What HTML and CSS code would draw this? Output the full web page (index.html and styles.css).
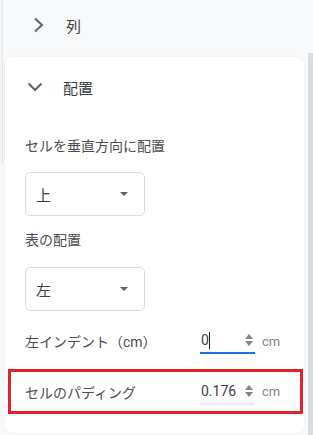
FILE: index.html
```html
<!DOCTYPE html>
<html lang="ja">
<head>
  <meta charset="UTF-8" />
  <title>表のプロパティ</title>
  <link rel="stylesheet" href="styles.css">
</head>
<body>
  <div class="page">
    <div class="rail"></div>

    <div class="main">
      <div class="section-head">
        <svg class="chevron-right" width="12" height="16" viewBox="0 0 12 16">
          <polyline points="2,1.5 9,8 2,14.5" />
        </svg>
        <span class="section-title">列</span>
      </div>

      <div class="card">
        <div class="card-head">
          <svg class="chevron-down" width="16" height="10" viewBox="0 0 16 10">
            <polyline points="1.5,1.5 8,8 14.5,1.5" />
          </svg>
          <span class="section-title">配置</span>
        </div>

        <div class="label first">セルを垂直方向に配置</div>
        <div class="select">
          <span>上</span>
          <span class="caret-down"></span>
        </div>

        <div class="label second">表の配置</div>
        <div class="select select-2">
          <span>左</span>
          <span class="caret-down"></span>
        </div>

        <div class="field-row">
          <div class="field-label">左インデント（cm）</div>
          <div class="number focused">
            <span class="value">0<span class="text-cursor"></span></span>
            <span class="spinner"><i class="up"></i><i class="down"></i></span>
          </div>
          <span class="unit">cm</span>
        </div>

        <div class="highlight">
          <div class="field-row inner">
            <div class="field-label">セルのパディング</div>
            <div class="number">
              <span class="value">0.176</span>
              <span class="spinner"><i class="up"></i><i class="down"></i></span>
            </div>
            <span class="unit">cm</span>
          </div>
        </div>
      </div>
    </div>

    <div class="scrollbar"></div>
  </div>
</body>
</html>
```

FILE: styles.css
```css
* {
  margin: 0;
  padding: 0;
  box-sizing: border-box;
  font-family: Roboto, 'Noto Sans CJK JP', sans-serif;
}

body {
  background-color: #f8f9fa;
  color: #4a4d51;
}

.page {
  display: flex;
  width: 313px;
  height: 435px;
  overflow: hidden;
}

.rail {
  width: 3px;
  height: 165px;
  border-right: 1px solid #e3e5e8;
  background-color: #f3f4f6;
}

.main {
  flex: 1;
  padding: 0 4px 0 2px;
}

.scrollbar {
  width: 5px;
  margin-top: 53px;
  background-color: #dadce0;
}

/* section headers */
.section-head,
.card-head {
  display: flex;
  align-items: center;
}

.section-head {
  height: 50px;
  padding-left: 28px;
}

.section-title {
  font-size: 15px;
  color: #3c4043;
}

.section-head .section-title {
  margin-left: 21px;
}

.chevron-right polyline,
.chevron-down polyline {
  fill: none;
  stroke: #5f6368;
  stroke-width: 2;
}

.card {
  margin-top: 7px;
  height: 376px;
  background-color: white;
  border-radius: 8px;
  box-shadow: 0 0 2px rgba(60, 64, 67, 0.08);
}

.card-head {
  height: 60px;
  padding-left: 22px;
}

.card-head .section-title {
  margin-left: 20px;
}

/* labels and dropdowns */
.label {
  font-size: 14px;
  line-height: 20px;
  padding-left: 20px;
}

.label.first { margin-top: 19px; }
.label.second { margin-top: 14px; }

.select {
  display: flex;
  align-items: center;
  justify-content: space-between;
  width: 120px;
  height: 44px;
  margin: 16px 0 0 20px;
  padding: 0 16px 0 10px;
  border: 1px solid #dadce0;
  border-radius: 5px;
  font-size: 15px;
  color: #3c4043;
}

.select-2 {
  margin-top: 17px;
}

.caret-down {
  width: 0;
  height: 0;
  border-left: 4px solid transparent;
  border-right: 4px solid transparent;
  border-top: 4px solid #5f6368;
}

/* number fields */
.field-row {
  display: flex;
  align-items: center;
  height: 40px;
  margin-top: 10px;
  padding-left: 20px;
}

.field-label {
  width: 175px;
  font-size: 14px;
}

.number {
  display: flex;
  align-items: center;
  justify-content: space-between;
  width: 55px;
  height: 26px;
  padding: 0 1px 0 1px;
  border-bottom: 2px solid #e8eaed;
}

.number.focused {
  border-bottom-color: #1a73e8;
}

.value {
  font-size: 14px;
  color: #3c4043;
  display: flex;
  align-items: center;
}

.text-cursor {
  width: 1px;
  height: 17px;
  background-color: #202124;
}

.spinner {
  display: flex;
  flex-direction: column;
  gap: 2px;
  margin-right: 1px;
}

.spinner i {
  width: 0;
  height: 0;
  border-left: 4px solid transparent;
  border-right: 4px solid transparent;
}

.spinner .up { border-bottom: 5px solid #80868b; }
.spinner .down { border-top: 5px solid #80868b; }

.unit {
  margin-left: 7px;
  font-size: 13px;
  color: #80868b;
}

.highlight {
  height: 45px;
  margin: 8px 1px 0 3px;
  border: 3px solid #e8202a;
}

.field-row.inner {
  height: 39px;
  margin-top: 0;
  padding-left: 14px;
}
```
